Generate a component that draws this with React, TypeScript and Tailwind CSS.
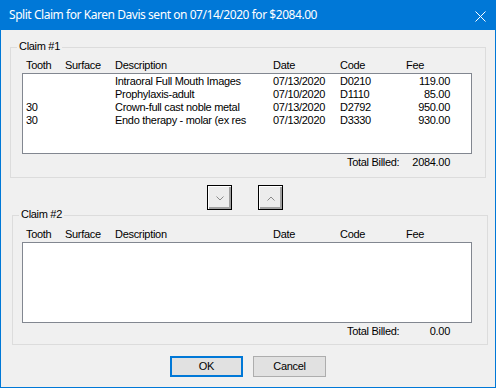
import React from "react";

const rows = [
  { tooth: "", surface: "", desc: "Intraoral Full Mouth Images", date: "07/13/2020", code: "D0210", fee: "119.00" },
  { tooth: "", surface: "", desc: "Prophylaxis-adult", date: "07/10/2020", code: "D1110", fee: "85.00" },
  { tooth: "30", surface: "", desc: "Crown-full cast noble metal", date: "07/13/2020", code: "D2792", fee: "950.00" },
  { tooth: "30", surface: "", desc: "Endo therapy - molar (ex res", date: "07/13/2020", code: "D3330", fee: "930.00" },
];

type Row = typeof rows[number];

function Header() {
  return (
    <div className="grid grid-cols-[39px_50px_158px_67px_66px_44px] pl-[4px] h-[13px] leading-[13px] w-[450px]">
      <span>Tooth</span>
      <span>Surface</span>
      <span>Description</span>
      <span>Date</span>
      <span>Code</span>
      <span>Fee</span>
    </div>
  );
}

function ListBox({ items }: { items: Row[] }) {
  return (
    <div className="mt-[1px] w-[450px] h-[81px] border border-[#828790] bg-white pt-[1px] pl-[3px] overflow-hidden">
      {items.map((r, i) => (
        <div key={i} className="grid grid-cols-[39px_50px_158px_67px_66px_44px] h-[13px] leading-[13px] whitespace-nowrap">
          <span>{r.tooth}</span>
          <span>{r.surface}</span>
          <span className="overflow-hidden">{r.desc}</span>
          <span>{r.date}</span>
          <span>{r.code}</span>
          <span className="text-right">{r.fee}</span>
        </div>
      ))}
    </div>
  );
}

function Total({ value }: { value: string }) {
  return (
    <div className="mt-[2px] flex h-[13px] leading-[13px] pl-[325px]">
      <span className="w-[64px] whitespace-nowrap">Total Billed:</span>
      <span className="w-[39px] text-right">{value}</span>
    </div>
  );
}

function Group({
  title,
  items,
  total,
  className,
  headerTop,
}: {
  title: string;
  items: Row[];
  total: string;
  className: string;
  headerTop: string;
}) {
  return (
    <div className={"relative w-[476px] border border-[#dcdcdc] " + className}>
      <span className="absolute left-[6px] top-[-8px] px-[2px] bg-[#f0f0f0] h-[13px] leading-[13px]">{title}</span>
      <div className={headerTop}>
        <Header />
      </div>
      <ListBox items={items} />
      <Total value={total} />
    </div>
  );
}

function ArrowButton({ dir }: { dir: "down" | "up" }) {
  return (
    <div className="w-[25px] h-[25px] border border-black bg-[#ececec] shadow-[inset_1px_1px_0_#ffffff,inset_-1px_-1px_0_#a0a0a0,inset_-2px_-2px_0_#a0a0a0] flex items-center justify-center">
      <svg width="8" height="5" viewBox="0 0 8 5" className="mt-[1px]">
        {dir === "down" ? (
          <polyline points="0.5,0.5 4,4 7.5,0.5" fill="none" stroke="#8a8a8a" strokeWidth="1" />
        ) : (
          <polyline points="0.5,4.5 4,1 7.5,4.5" fill="none" stroke="#8a8a8a" strokeWidth="1" />
        )}
      </svg>
    </div>
  );
}

export default function App() {
  return (
    <div
      className="w-[496px] h-[388px] border border-[#0078d7] bg-[#f0f0f0] flex flex-col text-[11px] text-black tracking-[-0.3px]"
      style={{ fontFamily: '"Liberation Sans", Arial, sans-serif' }}
    >
      <div
        className="h-[29px] bg-[#0078d7] flex items-center justify-between pl-[8px] pr-[9px] text-white text-[12px] tracking-[-0.45px]"
        style={{ fontFamily: '"Noto Sans", "Open Sans", sans-serif' }}
      >
        <span className="mt-[-1px]">Split Claim for Karen Davis sent on 07/14/2020 for $2084.00</span>
        <svg width="11" height="11" viewBox="0 0 11 11" className="mt-[1px]">
          <path d="M0.5 0.5 L10.5 10.5 M10.5 0.5 L0.5 10.5" stroke="#ffffff" strokeWidth="1" />
        </svg>
      </div>

      <Group
        title="Claim #1"
        items={rows}
        total="2084.00"
        className="mt-[17px] ml-[9px] h-[131px] pl-[11px]"
        headerTop="mt-[11px]"
      />

      <div className="mt-[7px] flex pl-[206px] gap-[26px]">
        <ArrowButton dir="down" />
        <ArrowButton dir="up" />
      </div>

      <Group
        title="Claim #2"
        items={[]}
        total="0.00"
        className="mt-[5px] ml-[11px] h-[130px] pl-[9px]"
        headerTop="mt-[12px]"
      />

      <div className="mt-[11px] flex pl-[169px] gap-[10px]">
        <div className="w-[73px] h-[21px] border-2 border-[#0078d7] bg-[#e1e1e1] flex items-center justify-center">OK</div>
        <div className="w-[73px] h-[21px] border border-[#adadad] bg-[#e1e1e1] flex items-center justify-center">Cancel</div>
      </div>
    </div>
  );
}
